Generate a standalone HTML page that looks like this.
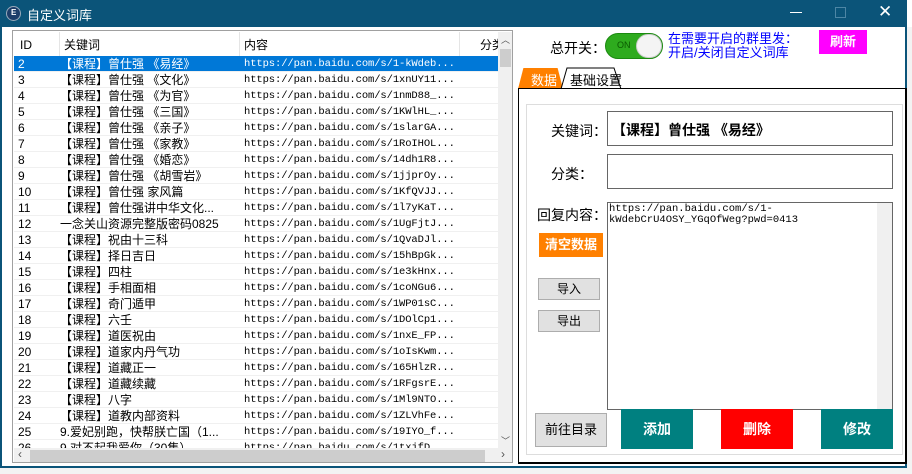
<!DOCTYPE html>
<html><head><meta charset="utf-8"><style>
*{margin:0;padding:0;box-sizing:border-box}
body{width:912px;height:474px;overflow:hidden;background:#fff;position:relative;font-family:"Liberation Sans","Noto Sans CJK SC",sans-serif;font-size:12px;color:#000}
.a{position:absolute}
.title{left:0;top:0;width:906px;height:27px;background:#0b5479}
.win{left:0;top:0;width:907px;height:468px;border:2px solid #0b5479;border-top:none}
.list{left:12px;top:30px;width:501px;height:433px;border:1px solid #a0a0a0;background:#fff;overflow:hidden}
.row{position:absolute;left:1px;width:484px;height:16px;line-height:16px;border-bottom:1px solid #f0f0f0}
.row span{position:absolute;top:0;white-space:nowrap;overflow:hidden}
.c1{left:4px}.c2{left:46px;width:180px}.c3{left:230px;font-family:"Liberation Mono",monospace;font-size:10.5px;letter-spacing:-.1px}
.sel{background:#0078d7;color:#fff}
.hd{position:absolute;left:1px;top:1px;width:484px;height:24px;line-height:26px;overflow:hidden}
.hd span{position:absolute;top:0;white-space:nowrap}
.vl{position:absolute;top:0;width:1px;height:24px;background:#e5e5e5}
.btn{position:absolute;text-align:center;color:#fff;font-weight:bold}
</style></head><body>
<div class="a title"></div>
<div class="a" style="left:6px;top:6px;width:15px;height:15px;border-radius:50%;background:#1d3e6a;border:1px solid #9ab"></div>
<div class="a" style="left:11px;top:8px;color:#fff;font-size:8px;font-weight:bold">E</div>
<div class="a" style="left:27px;top:5px;color:#fff;font-size:13px">自定义词库</div>
<div class="a" style="left:790px;top:12px;width:12px;height:1px;background:#fff"></div>
<div class="a" style="left:835px;top:7px;width:11px;height:11px;border:1px solid #4d86a5"></div>
<div class="a" style="left:878px;top:2px;color:#fff;font-size:17px">✕</div>
<div class="a win"></div>
<div class="a" style="left:0;top:468px;width:912px;height:6px;background:#f3f3f3"></div>
<div class="a" style="left:907px;top:27px;width:5px;height:441px;background:#f3f3f3"></div>

<div class="a list">
<div class="hd"><span style="left:6px">ID</span><span style="left:50px">关键词</span><span style="left:230px">内容</span><span style="left:466px">分类</span>
<div class="vl" style="left:45px"></div><div class="vl" style="left:225px"></div><div class="vl" style="left:445px"></div></div>
<div id="rows"></div>
<div style="position:absolute;left:485px;top:1px;width:15px;height:416px;background:#f0f0f0"></div>
<div style="position:absolute;left:487px;top:18px;width:11px;height:18px;background:#cdcdcd"></div>
<div style="position:absolute;left:488px;top:2px;font-size:9px;color:#555">︿</div>
<div style="position:absolute;left:488px;top:403px;font-size:9px;color:#555">﹀</div>
<div style="position:absolute;left:1px;top:417px;width:499px;height:15px;background:#f0f0f0"></div>
<div style="position:absolute;left:17px;top:419px;width:455px;height:12px;background:#cdcdcd"></div>
<div style="position:absolute;left:5px;top:416px;color:#555">‹</div><div style="position:absolute;left:488px;top:416px;color:#555">›</div>
</div>

<div class="a" style="left:550px;top:38px;font-size:14px">总开关：</div>
<div class="a" style="left:605px;top:33px;width:58px;height:26px;border-radius:13px;background:#2eab1e;border:1px solid #1b8a10"></div>
<div class="a" style="left:617px;top:40px;font-size:9px;color:#0a5a00">ON</div>
<div class="a" style="left:636px;top:34px;width:26px;height:24px;border-radius:12px;background:#f4f4f4;border:1px solid #ccc"></div>
<div class="a" style="left:668px;top:32px;color:#00f;font-size:13px;line-height:14px">在需要开启的群里发：<br>开启/关闭自定义词库</div>
<div class="btn" style="left:819px;top:30px;width:48px;height:24px;line-height:24px;background:#f0f;font-size:13px">刷新</div>

<div class="a" style="left:518px;top:68px;width:45px;height:21px;background:#ff8000;clip-path:polygon(12% 0,88% 0,100% 100%,0 100%)"></div>
<div class="a" style="left:531px;top:70px;color:#fff;font-size:13px">数据</div>
<svg class="a" style="left:560px;top:67px" width="62" height="23"><path d="M1 22 L7 1 L54 1 L61 22" fill="#fff" stroke="#000"/></svg>
<div class="a" style="left:570px;top:70px;font-size:13px">基础设置</div>
<div class="a" style="left:518px;top:88px;width:389px;height:376px;border:1px solid #000;border-right:2px solid #000;border-bottom:2px solid #000"></div>
<div class="a" style="left:526px;top:104px;width:377px;height:351px;border:1px solid #ddd"></div>

<div class="a" style="left:551px;top:121px;font-size:14px">关键词：</div>
<div class="a" style="left:607px;top:111px;width:286px;height:35px;border:1px solid #666;padding:8px 4px;font-size:14px;font-weight:bold">【课程】曾仕强 《易经》</div>
<div class="a" style="left:551px;top:164px;font-size:14px">分类：</div>
<div class="a" style="left:607px;top:154px;width:286px;height:35px;border:1px solid #666"></div>
<div class="a" style="left:537px;top:205px;font-size:14px">回复内容：</div>
<div class="a" style="left:607px;top:202px;width:286px;height:208px;border:1px solid #666;font-family:'Liberation Mono',monospace;font-size:10.5px;line-height:11px;padding:1px 0 0 1px">https://pan.baidu.com/s/1-<br>kWdebCrU4OSY_YGqOfWeg?pwd=0413</div>
<div class="a" style="left:877px;top:203px;width:15px;height:206px;background:#f0f0f0"></div>
<div class="btn" style="left:539px;top:233px;width:64px;height:24px;line-height:24px;background:#ff8000;font-size:13px">清空数据</div>
<div class="a" style="left:538px;top:278px;width:62px;height:22px;border:1px solid #adadad;background:#e1e1e1;text-align:center;line-height:20px">导入</div>
<div class="a" style="left:538px;top:310px;width:62px;height:22px;border:1px solid #adadad;background:#e1e1e1;text-align:center;line-height:20px">导出</div>
<div class="a" style="left:535px;top:413px;width:72px;height:34px;border:1px solid #adadad;background:#e1e1e1;text-align:center;line-height:32px;font-size:13px">前往目录</div>
<div class="btn" style="left:621px;top:409px;width:72px;height:40px;line-height:40px;background:#008080;font-size:14px">添加</div>
<div class="btn" style="left:721px;top:409px;width:72px;height:40px;line-height:40px;background:#f00;font-size:14px">删除</div>
<div class="btn" style="left:821px;top:409px;width:72px;height:40px;line-height:40px;background:#008080;font-size:14px">修改</div>

<script>
var d=[["2","【课程】曾仕强 《易经》","1-kWdeb"],["3","【课程】曾仕强 《文化》","1xnUY11"],["4","【课程】曾仕强 《为官》","1nmD88_"],["5","【课程】曾仕强 《三国》","1KWlHL_"],["6","【课程】曾仕强 《亲子》","1slarGA"],["7","【课程】曾仕强 《家教》","1RoIHOL"],["8","【课程】曾仕强 《婚恋》","14dh1R8"],["9","【课程】曾仕强 《胡雪岩》","1jjprOy"],["10","【课程】曾仕强  家风篇","1KfQVJJ"],["11","【课程】曾仕强讲中华文化...","1l7yKaT"],["12","一念关山资源完整版密码0825","1UgFjtJ"],["13","【课程】祝由十三科","1QvaDJl"],["14","【课程】择日吉日","15hBpGk"],["15","【课程】四柱","1e3kHnx"],["16","【课程】手相面相","1coNGu6"],["17","【课程】奇门遁甲","1WP01sC"],["18","【课程】六壬","1DOlCp1"],["19","【课程】道医祝由","1nxE_FP"],["20","【课程】道家内丹气功","1oIsKwm"],["21","【课程】道藏正一","165HlzR"],["22","【课程】道藏续藏","1RFgsrE"],["23","【课程】八字","1Ml9NTO"],["24","【课程】道教内部资料","1ZLVhFe"],["25","9.爱妃别跑，快帮朕亡国（1...","19IYO_f"],["26","9.对不起我爱你（30集）","1txjfD_"]];
var h="";d.forEach(function(r,i){h+='<div class="row'+(i==0?' sel':'')+'" style="top:'+(25+i*16)+'px"><span class="c1">'+r[0]+'</span><span class="c2">'+r[1]+'</span><span class="c3">https://pan.baidu.com/s/'+r[2]+'...</span></div>';});
document.getElementById("rows").innerHTML=h;
</script>
</body></html>
